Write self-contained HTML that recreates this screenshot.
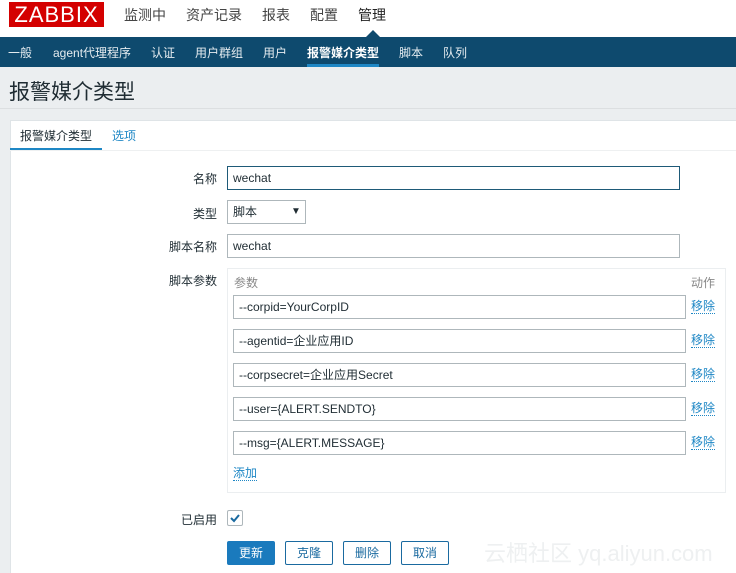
<!DOCTYPE html>
<html><head><meta charset="utf-8"><style>
*{margin:0;padding:0;box-sizing:border-box}
body{width:736px;height:573px;overflow:hidden;background:#ebeef0;font-family:"Liberation Sans","Noto Sans CJK SC",sans-serif;font-size:12px;color:#1f2c33;position:relative}
.a{position:absolute}
.hdr{left:0;top:0;width:736px;height:37px;background:#fff}
.logo{left:9px;top:2px;width:95px;height:25px;background:#d40000;color:#fff;font-size:22px;line-height:25px;text-align:center;letter-spacing:1px}
.top{top:5px;font-size:14px;color:#444}
.nav{left:0;top:37px;width:736px;height:30px;background:#0e4a6e}
.nav span{position:absolute;top:7px;color:#e5ecf0;font-size:12px}
.inp{background:#fff;border:1px solid #aeb7bb;height:24px;padding-left:5px;line-height:22px;font-size:12px;color:#1f2c33}
.lbl{font-size:12px;text-align:right;width:60px;left:157px}
.rm{left:691px;color:#1e87c5;border-bottom:1px dotted #1e87c5;line-height:14px}
.btn{top:541px;width:48px;height:24px;border:1px solid #1a6aa0;border-radius:2px;background:#fff;color:#1a6aa0;text-align:center;line-height:22px}
</style></head><body>
<div class="a hdr"></div>
<div class="a logo">ZABBIX</div>
<div class="a top" style="left:124px">监测中</div>
<div class="a top" style="left:186px">资产记录</div>
<div class="a top" style="left:262px">报表</div>
<div class="a top" style="left:310px">配置</div>
<div class="a top" style="left:358px;color:#222">管理</div>
<div class="a" style="left:366px;top:30px;width:0;height:0;border-left:7px solid transparent;border-right:7px solid transparent;border-bottom:7px solid #0e4a6e"></div>
<div class="a nav">
<span style="left:8px">一般</span><span style="left:53px">agent代理程序</span><span style="left:151px">认证</span><span style="left:195px">用户群组</span><span style="left:263px">用户</span><span style="left:307px;color:#fff;font-weight:bold">报警媒介类型</span><span style="left:399px">脚本</span><span style="left:443px">队列</span>
<div class="a" style="left:307px;top:27px;width:72px;height:3px;background:#1e87c5"></div>
</div>
<div class="a" style="left:9px;top:76px;font-size:21px;color:#1f2c33">报警媒介类型</div>
<div class="a" style="left:0;top:108px;width:736px;height:1px;background:#dcdfe1"></div>
<div class="a" style="left:10px;top:120px;width:726px;height:453px;background:#fff;border:1px solid #dfe4e7;border-right:none;border-bottom:none"></div>
<div class="a" style="left:20px;top:127px">报警媒介类型</div>
<div class="a" style="left:112px;top:127px;color:#1e87c5">选项</div>
<div class="a" style="left:10px;top:148px;width:92px;height:3px;background:#1e87c5"></div>
<div class="a" style="left:10px;top:150px;width:726px;height:1px;background:#eef0f1"></div>

<div class="a lbl" style="top:170px">名称</div>
<div class="a inp" style="left:227px;top:166px;width:453px;border-color:#1e5a78">wechat</div>
<div class="a lbl" style="top:205px">类型</div>
<div class="a inp" style="left:227px;top:200px;width:79px">脚本<span style="position:absolute;left:63px;font-size:10px">▼</span></div>
<div class="a lbl" style="top:238px">脚本名称</div>
<div class="a inp" style="left:227px;top:234px;width:453px">wechat</div>
<div class="a lbl" style="top:272px">脚本参数</div>
<div class="a" style="left:227px;top:268px;width:499px;height:225px;border:1px solid #ebeef0"></div>
<div class="a" style="left:234px;top:274px;color:#888">参数</div>
<div class="a" style="left:691px;top:274px;color:#888">动作</div>
<div class="a inp" style="left:233px;top:295px;width:453px">--corpid=YourCorpID</div><div class="a rm" style="top:299px">移除</div>
<div class="a inp" style="left:233px;top:329px;width:453px">--agentid=企业应用ID</div><div class="a rm" style="top:333px">移除</div>
<div class="a inp" style="left:233px;top:363px;width:453px">--corpsecret=企业应用Secret</div><div class="a rm" style="top:367px">移除</div>
<div class="a inp" style="left:233px;top:397px;width:453px">--user={ALERT.SENDTO}</div><div class="a rm" style="top:401px">移除</div>
<div class="a inp" style="left:233px;top:431px;width:453px">--msg={ALERT.MESSAGE}</div><div class="a rm" style="top:435px">移除</div>
<div class="a rm" style="left:233px;top:466px">添加</div>
<div class="a lbl" style="top:511px">已启用</div>
<div class="a" style="left:227px;top:510px;width:16px;height:16px;border:1px solid #aeb7bb;border-radius:2px"><svg width="14" height="14" viewBox="0 0 14 14"><path d="M3 7l3 3 5-6" stroke="#1a6aa0" stroke-width="2" fill="none"/></svg></div>
<div class="a btn" style="left:227px;background:#1a7abd;color:#fff;border-color:#1a7abd">更新</div>
<div class="a btn" style="left:285px">克隆</div>
<div class="a btn" style="left:343px">删除</div>
<div class="a btn" style="left:401px">取消</div>
<div class="a" style="left:484px;top:536px;font-size:22px;color:#eef0f1">云栖社区 yq.aliyun.com</div>
</body></html>
